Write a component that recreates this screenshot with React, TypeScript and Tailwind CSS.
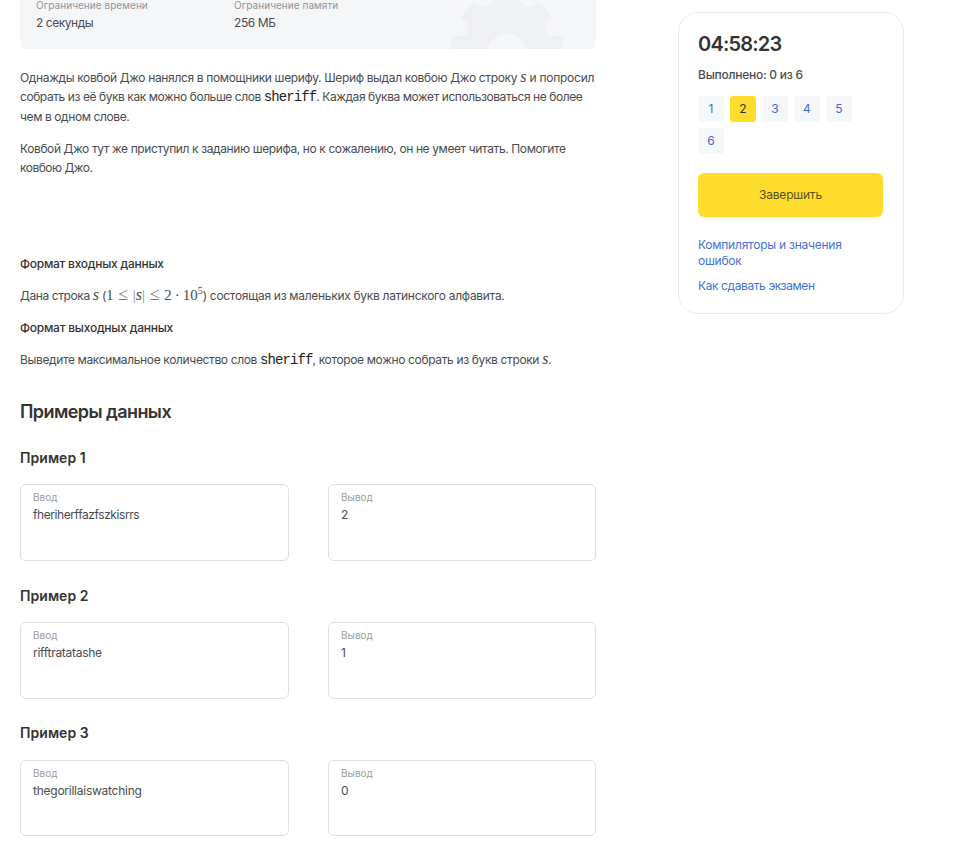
import type { ReactNode } from 'react';

function Line({ children, className = '', tight = false }: { children: ReactNode; className?: string; tight?: boolean }) {
  return (
    <span className={`block leading-5 whitespace-nowrap ${tight ? 'h-[19px]' : 'h-5'} ${className}`}>{children}</span>
  );
}

function S() {
  return <i className="font-['Liberation_Serif',serif] text-[16px] leading-none tracking-normal">s</i>;
}

function Word() {
  return (
    <code className="font-['Liberation_Mono',monospace] text-[14px] leading-none tracking-[-0.9px] text-[#222]">sheriff</code>
  );
}

function Formula() {
  return (
    <span className="font-['Liberation_Serif',serif] text-[15px] leading-[0] tracking-normal">
      1<span className="mx-[4.7px] text-[18px] leading-[0] text-[#777]">≤</span>
      <span className="text-[#888]">|</span><i className="text-[16px] leading-[0]">s</i><span className="text-[#888]">|</span>
      <span className="mx-[4.7px] text-[18px] leading-[0] text-[#777]">≤</span>2
      <span className="mx-[3px]">·</span>10<span className="relative -top-[6px] text-[10px] leading-[0]">5</span>
    </span>
  );
}

function Gear() {
  return (
    <svg className="absolute right-[31px] bottom-0" width="116" height="49" viewBox="0 0 116 49" fill="#eff0f2" fillRule="evenodd">
      <path d="M2 49V40Q2 36 6 36H13Q18 36 19 30L20 25Q20 23 17 22L14 20Q11 17 14 14L22 5Q25 1 28 4L31 6Q34 8 38 6Q44 5 45 0H71Q72 5 77 6Q81 8 84 6L87 4Q90 1 93 5L101 14Q104 17 101 20L98 22Q95 23 95 25L97 30Q98 36 103 36H110Q114 36 114 40V49H76A19 20 0 0 0 39 49Z" />
    </svg>
  );
}

function Box({ label, value, tracking = '' }: { label: string; value: string; tracking?: string }) {
  return (
    <div className="h-full rounded-[6px] border border-[#dddfe0] px-3 pt-[6px]">
      <div className="h-3 text-[10px] leading-3 text-[#999ca1]">{label}</div>
      <div className="mt-[3px] text-[12px] leading-[18px]"><span className={tracking}>{value}</span></div>
    </div>
  );
}

const examples = [
  { input: 'fheriherffazfszkisrrs', output: '2', tracking: 'tracking-[-0.42px]', margin: 'mt-6', height: 'h-[77px]' },
  { input: 'rifftratatashe', output: '1', tracking: 'tracking-[-0.28px]', margin: 'mt-[25px]', height: 'h-[77px]' },
  { input: 'thegorillaiswatching', output: '0', tracking: 'tracking-[-0.25px]', margin: 'mt-6', height: 'h-[76px]' },
];

export default function App() {
  return (
    <div className="flex h-[864px] items-start overflow-hidden bg-white pl-5 font-['Inter',sans-serif] text-[12px] text-[#4a4c50]">
      <main className="w-[576px]">
        <section className="relative flex h-[49px] rounded-b-[6px] bg-[#f5f6f8] pl-4">
          <div className="w-[198px]">
            <div className="-mt-px h-3 text-[10px] leading-3 tracking-[0.05px] text-[#90959c]">Ограничение времени</div>
            <div className="mt-[3px] leading-[18px] tracking-[-0.45px]">2 секунды</div>
          </div>
          <div>
            <div className="-mt-px h-3 text-[10px] leading-3 tracking-[0.05px] text-[#90959c]">Ограничение памяти</div>
            <div className="mt-[3px] leading-[18px] tracking-[-0.4px]">256 МБ</div>
          </div>
          <Gear />
        </section>

        <p className="mt-[19px]">
          <Line tight className="tracking-[-0.35px]">
            Однажды ковбой Джо нанялся в помощники шерифу. Шериф выдал ковбою Джо строку <S />
            <span className="tracking-[-0.25px]"> и попросил</span>
          </Line>
          <Line className="tracking-[-0.43px]">собрать из её букв как можно больше слов <Word />. Каждая буква может использоваться не более</Line>
          <Line className="tracking-[-0.4px]">чем в одном слове.</Line>
        </p>
        <p className="mt-3">
          <Line tight className="tracking-[-0.39px]">Ковбой Джо тут же приступил к заданию шерифа, но к сожалению, он не умеет читать. Помогите</Line>
          <Line className="tracking-[-0.5px]">ковбою Джо.</Line>
        </p>
        <h4 className="mt-[76px] font-medium text-[#333]"><Line className="tracking-[-0.25px]">Формат входных данных</Line></h4>
        <p className="mt-3">
          <Line className="tracking-[-0.4px]">
            Дана строка <S /> (<Formula />)
            <span className="tracking-[-0.3px]"> состоящая из маленьких букв латинского алфавита.</span>
          </Line>
        </p>
        <h4 className="mt-3 font-medium text-[#333]"><Line className="tracking-[-0.23px]">Формат выходных данных</Line></h4>
        <p className="mt-3">
          <Line className="tracking-[-0.36px]">Выведите максимальное количество слов <Word />, которое можно собрать из букв строки <S />.</Line>
        </p>

        <h2 className="mt-[30px] h-6 text-[18px] leading-6 font-semibold tracking-[-0.57px] text-[#333]"><span>Примеры данных</span></h2>
        {examples.map(({ input, output, tracking, margin, height }, i) => (
          <section key={input} className={margin}>
            <h3 className="h-5 text-[14px] leading-5 font-semibold tracking-[0.05px] text-[#333]"><span>Пример {i + 1}</span></h3>
            <div className={`grid grid-cols-[269px_268px] gap-x-[39px] ${i === 2 ? 'mt-[17px]' : 'mt-4'} ${height}`}>
              <Box label="Ввод" value={input} tracking={tracking} />
              <Box label="Вывод" value={output} />
            </div>
          </section>
        ))}
      </main>

      <aside className="mt-3 ml-[82px] h-[302px] w-[226px] rounded-[20px] border border-[#ebecee] px-[19px] pt-[19px]">
        <div className="h-6 text-[20px] leading-6 font-semibold tracking-[-0.8px] text-[#333]"><span>04:58:23</span></div>
        <div className="mt-[11px] h-4 leading-4 font-medium tracking-[-0.25px]"><span>Выполнено: 0 из 6</span></div>
        <div className="mt-[13px] flex w-[160px] flex-wrap gap-[6px]">
          {[1, 2, 3, 4, 5, 6].map((n) => (
            <div
              key={n}
              className={`flex size-[26px] items-center justify-center rounded-[3px] ${n === 2 ? 'bg-[#ffdd2d] text-[#333]' : 'bg-[#f6f7f8] text-[#426bd9]'}`}
            >
              {n}
            </div>
          ))}
        </div>
        <button className="mt-[19px] flex h-11 w-[185px] items-center justify-center rounded-[6px] bg-[#ffdd2d] tracking-[-0.2px] text-[#5a501d]">Завершить</button>
        <div className="mt-5 leading-4 text-[#4272d7]">
          <a className="block tracking-[-0.24px]">Компиляторы и значения<br />ошибок</a>
          <a className="mt-[9px] block tracking-[-0.4px]">Как сдавать экзамен</a>
        </div>
      </aside>
    </div>
  );
}
